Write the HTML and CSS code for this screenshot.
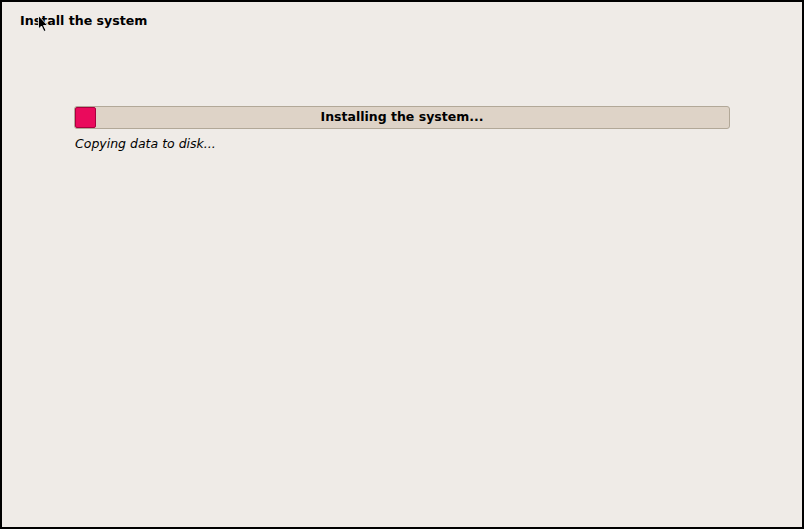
FILE: index.html
```html
<!DOCTYPE html>
<html>
<head>
<meta charset="utf-8">
<link rel="stylesheet" href="styles.css">
</head>
<body>
<div class="window">
  <h1 class="title">Install the system</h1>
  <div class="content">
    <div class="bar">
      <div class="fill"></div>
      <span class="bar-label">Installing the system...</span>
    </div>
    <p class="status">Copying data to disk...</p>
  </div>
  <svg class="cursor" width="12" height="18" viewBox="0 0 12 18">
    <path d="M0.5 0.5 L0.5 14 L3.5 11 L6 16.5 L8 15.5 L5.5 10.5 L9.5 10.5 Z" fill="#000" stroke="#fff" stroke-width="0.8"/>
  </svg>
</div>
</body>
</html>
```
FILE: styles.css
```css
html, body {
  margin: 0;
  padding: 0;
}
body {
  width: 804px;
  height: 529px;
  font-family: "DejaVu Sans", sans-serif;
  color: #000;
}
.window {
  position: relative;
  box-sizing: border-box;
  width: 804px;
  height: 529px;
  border: 2px solid #000;
  background: #efebe7;
  padding: 11px 0 0 18px;
}
.title {
  margin: 0;
  font-size: 12.6px;
  font-weight: bold;
  line-height: 16px;
}
.content {
  margin: 77px 0 0 54px;
  width: 656px;
}
.bar {
  position: relative;
  box-sizing: border-box;
  height: 23px;
  border: 1px solid #b2a898;
  border-radius: 3px;
  background: #ded3c7;
  display: flex;
  align-items: center;
  justify-content: center;
}
.fill {
  position: absolute;
  left: 0;
  top: 0;
  box-sizing: border-box;
  width: 21px;
  height: 21px;
  background: #ea0a5c;
  border: 1px solid #a8003f;
  border-radius: 2px;
}
.bar-label {
  font-size: 12.5px;
  font-weight: bold;
  line-height: 15px;
  margin-top: -2px;
}
.status {
  margin: 7px 0 0 1px;
  font-size: 12.5px;
  font-style: italic;
  line-height: 15px;
}
.cursor {
  position: absolute;
  left: 36px;
  top: 13px;
}
```
